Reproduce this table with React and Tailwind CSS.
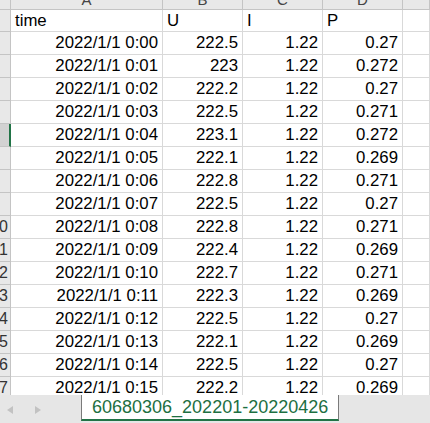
import React from "react";

const rows = [
  ["2022/1/1 0:00", "222.5", "1.22", "0.27"],
  ["2022/1/1 0:01", "223", "1.22", "0.272"],
  ["2022/1/1 0:02", "222.2", "1.22", "0.27"],
  ["2022/1/1 0:03", "222.5", "1.22", "0.271"],
  ["2022/1/1 0:04", "223.1", "1.22", "0.272"],
  ["2022/1/1 0:05", "222.1", "1.22", "0.269"],
  ["2022/1/1 0:06", "222.8", "1.22", "0.271"],
  ["2022/1/1 0:07", "222.5", "1.22", "0.27"],
  ["2022/1/1 0:08", "222.8", "1.22", "0.271"],
  ["2022/1/1 0:09", "222.4", "1.22", "0.269"],
  ["2022/1/1 0:10", "222.7", "1.22", "0.271"],
  ["2022/1/1 0:11", "222.3", "1.22", "0.269"],
  ["2022/1/1 0:12", "222.5", "1.22", "0.27"],
  ["2022/1/1 0:13", "222.1", "1.22", "0.269"],
  ["2022/1/1 0:14", "222.5", "1.22", "0.27"],
  ["2022/1/1 0:15", "222.2", "1.22", "0.269"],
];

const cols = "grid grid-cols-[11px_152px_80px_80px_80px_1fr]";

const RowHeader = ({ n, selected }) => (
  <div
    className={`overflow-hidden border-r border-b border-[#c4c4c4] ${
      selected ? "bg-[#d2d2d2] border-r-2 border-r-[#217346]" : "bg-[#e8e8e8]"
    }`}
  >
    <div className="w-[30px] -ml-[22px] text-right text-[16px] leading-[22px] text-[#333]">
      {n >= 10 ? n : ""}
    </div>
  </div>
);

const Cell = ({ children, right }) => (
  <div
    className={`border-r border-b border-[#d9d9d9] px-[4px] whitespace-nowrap overflow-hidden ${
      right ? "text-right" : "text-left"
    }`}
  >
    {children}
  </div>
);

const ColHeader = ({ label }) => (
  <div className="h-[10px] overflow-hidden border-r border-b border-[#c4c4c4] bg-[#e8e8e8]">
    <div className="-mt-[8px] text-center text-[15px] leading-[15px] text-[#444]">
      {label}
    </div>
  </div>
);

export default function App() {
  return (
    <div
      className="w-[430px] h-[423px] overflow-hidden flex flex-col bg-white text-black"
      style={{ fontFamily: '"Liberation Sans", Arial, sans-serif' }}
    >
      <div className="flex-1 overflow-hidden">
        <div className={cols}>
          <ColHeader label="" />
          <ColHeader label="A" />
          <ColHeader label="B" />
          <ColHeader label="C" />
          <ColHeader label="D" />
          <ColHeader label="" />
        </div>

        {/* header row */}
        <div className={`${cols} h-[22px] text-[16.8px] leading-[21px]`}>
          <RowHeader n={1} />
          <Cell>time</Cell>
          <Cell>U</Cell>
          <Cell>I</Cell>
          <Cell>P</Cell>
          <Cell />
        </div>

        {rows.map((r, i) => (
          <div key={i} className={`${cols} h-[23px] text-[16.8px] leading-[22px]`}>
            <RowHeader n={i + 2} selected={i + 2 === 6} />
            <Cell right>{r[0]}</Cell>
            <Cell right>{r[1]}</Cell>
            <Cell right>{r[2]}</Cell>
            <Cell right>{r[3]}</Cell>
            <Cell />
          </div>
        ))}
      </div>

      {/* sheet tabs */}
      <div className="h-[28px] flex bg-[#e6e6e6]">
        <div className="w-[81px] flex items-center gap-[22px] pl-[7px] pt-[2px]">
          <svg width="6" height="8" viewBox="0 0 6 8">
            <path d="M6 0 L0 4 L6 8 Z" fill="#c2c2c2" />
          </svg>
          <svg width="6" height="8" viewBox="0 0 6 8">
            <path d="M0 0 L6 4 L0 8 Z" fill="#c2c2c2" />
          </svg>
        </div>
        <div className="w-[258px] h-[26px] bg-white border-l border-r border-[#7a7a7a] border-b-2 border-b-[#217346] pl-[10px] text-[18px] leading-[24px] text-[#1d6f42] whitespace-nowrap">
          60680306_202201-20220426
        </div>
        <div className="flex-1" />
      </div>
    </div>
  );
}
